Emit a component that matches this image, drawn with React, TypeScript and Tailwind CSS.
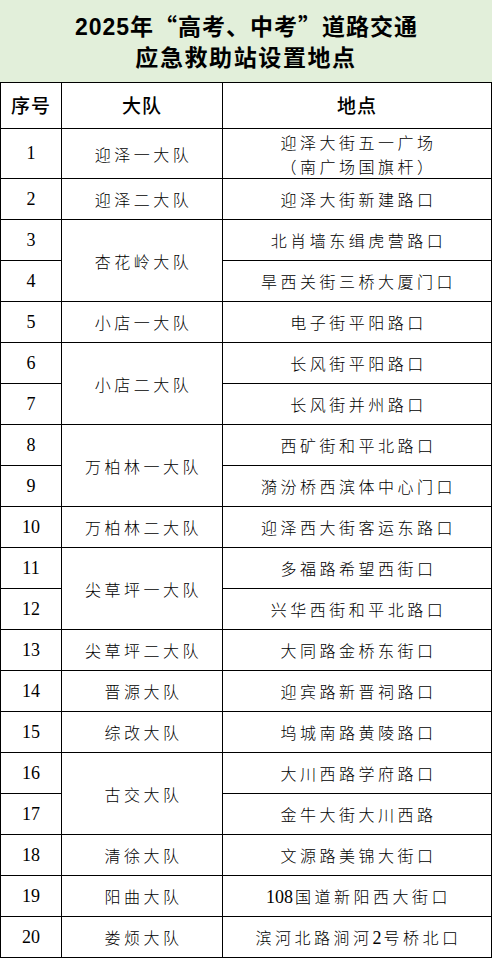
import React from 'react';

type Row = { no: number; team?: string; span?: number; place: string[] };

const rows: Row[] = [
  { no: 1, team: '迎泽一大队', place: ['迎泽大街五一广场', '（南广场国旗杆）'] },
  { no: 2, team: '迎泽二大队', place: ['迎泽大街新建路口'] },
  { no: 3, team: '杏花岭大队', span: 2, place: ['北肖墙东缉虎营路口'] },
  { no: 4, place: ['旱西关街三桥大厦门口'] },
  { no: 5, team: '小店一大队', place: ['电子街平阳路口'] },
  { no: 6, team: '小店二大队', span: 2, place: ['长风街平阳路口'] },
  { no: 7, place: ['长风街并州路口'] },
  { no: 8, team: '万柏林一大队', span: 2, place: ['西矿街和平北路口'] },
  { no: 9, place: ['漪汾桥西滨体中心门口'] },
  { no: 10, team: '万柏林二大队', place: ['迎泽西大街客运东路口'] },
  { no: 11, team: '尖草坪一大队', span: 2, place: ['多福路希望西街口'] },
  { no: 12, place: ['兴华西街和平北路口'] },
  { no: 13, team: '尖草坪二大队', place: ['大同路金桥东街口'] },
  { no: 14, team: '晋源大队', place: ['迎宾路新晋祠路口'] },
  { no: 15, team: '综改大队', place: ['坞城南路黄陵路口'] },
  { no: 16, team: '古交大队', span: 2, place: ['大川西路学府路口'] },
  { no: 17, place: ['金牛大街大川西路'] },
  { no: 18, team: '清徐大队', place: ['文源路美锦大街口'] },
  { no: 19, team: '阳曲大队', place: ['108国道新阳西大街口'] },
  { no: 20, team: '娄烦大队', place: ['滨河北路涧河2号桥北口'] },
];

const cjk = "font-['Noto_Sans_CJK_SC',sans-serif]";

// digits inside a place name stay tight and serif, like the sheet
function Place({ text }: { text: string }) {
  const parts = text.split(/(\d+)/).filter(Boolean);
  return (
    <div>
      {parts.map((p, i) =>
        /^\d+$/.test(p) ? (
          <span key={i} className="font-['Liberation_Serif',serif] text-[18px] tracking-normal mr-[2px]">
            {p}
          </span>
        ) : (
          <span key={i}>{p}</span>
        )
      )}
    </div>
  );
}

export default function App() {
  return (
    <div className="w-[492px] min-h-[958px] bg-white text-black">
      {/* title block */}
      <div className="h-[82px] bg-[#e2efda] flex flex-col items-center justify-center font-bold text-[23px] leading-[29.5px]">
        <div className="font-['Liberation_Sans','Noto_Sans_CJK_SC',sans-serif] tracking-[1px] pl-[1px]">
          2025年<span className={cjk}>“</span>高考、中考<span className={cjk}>”</span>道路交通
        </div>
        <div className={`tracking-[1.6px] ${cjk}`}>应急救助站设置地点</div>
      </div>

      <table className="table-fixed border-collapse w-[491px] border border-black">
        <colgroup>
          <col className="w-[61px]" />
          <col className="w-[161px]" />
          <col className="w-[269px]" />
        </colgroup>
        <thead>
          <tr className="h-[46px]">
            {['序号', '大队', '地点'].map((h) => (
              <th
                key={h}
                className={`border border-black p-0 text-center align-middle text-[19px] font-medium tracking-[1px] ${cjk}`}
              >
                {h}
              </th>
            ))}
          </tr>
        </thead>
        <tbody>
          {rows.map((r) => (
            <tr key={r.no} className={r.no === 1 ? 'h-[50px]' : 'h-[41px]'}>
              <td className="border border-black p-0 text-center align-middle font-['Liberation_Serif',serif] text-[18px]">
                {r.no}
              </td>
              {r.team && (
                <td
                  rowSpan={r.span ?? 1}
                  className={`border border-black p-0 pl-[3px] text-center align-middle text-[16px] font-light tracking-[3.5px] ${cjk}`}
                >
                  {r.team}
                </td>
              )}
              <td
                className={`border border-black p-0 pl-[3px] text-center align-middle text-[16px] font-light tracking-[3.5px] leading-[24px] ${cjk}`}
              >
                {r.place.map((p) => (
                  <Place key={p} text={p} />
                ))}
              </td>
            </tr>
          ))}
        </tbody>
      </table>
    </div>
  );
}
